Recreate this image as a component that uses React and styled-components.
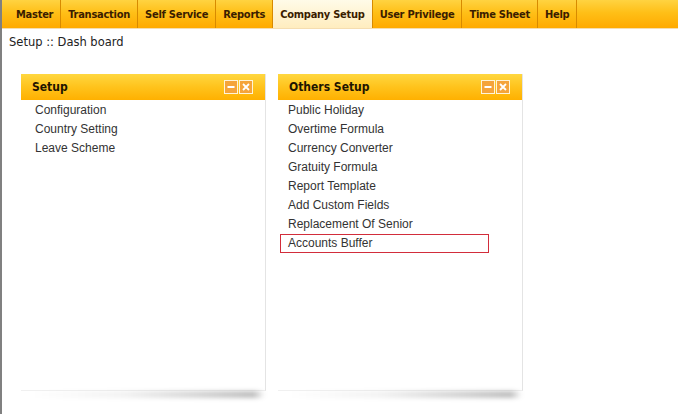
import React from 'react'
import styled, { createGlobalStyle } from 'styled-components'

const GlobalStyle = createGlobalStyle`
  html, body {
    margin: 0;
    padding: 0;
    background: #fff;
  }
  body {
    width: 678px;
    height: 414px;
    overflow: hidden;
    border-left: 2px solid #808080;
    box-sizing: border-box;
  }
`

const Page = styled.div`
  width: 676px;
  height: 414px;
  font-family: "Liberation Sans", Arial, sans-serif;
`

const MenuBar = styled.ul`
  display: flex;
  margin: 0;
  padding: 0 0 0 7px;
  height: 28px;
  list-style: none;
  background: linear-gradient(#ffd341 0%, #ffbf17 45%, #ffaa00 100%);
  border-bottom: 1px solid #f5ddb0;
`

const MenuItem = styled.li`
  display: flex;
  align-items: center;
  padding: 0 7px;
  font-family: "DejaVu Sans Condensed", "DejaVu Sans", sans-serif;
  font-weight: bold;
  font-size: 11px;
  letter-spacing: -0.25px;
  color: #3a1d00;
  border-right: 1px solid #d88a00;
  background: ${p => (p.$active ? 'linear-gradient(#fffbe8, #ffedbf)' : 'transparent')};
  cursor: pointer;
`

const Crumb = styled.div`
  padding: 6px 0 0 7px;
  height: 22px;
  font-family: "DejaVu Sans", sans-serif;
  font-size: 11.5px;
  color: #222;
`

const Panels = styled.div`
  display: flex;
  gap: 12px;
  padding: 17px 0 0 19px;
`

const Panel = styled.div`
  position: relative;
  width: 244px;
  height: 316px;
  background: #fff;
  border-right: 1px solid #e4e4e4;
  border-bottom: 1px solid #f0f0f0;
  &::after {
    content: '';
    position: absolute;
    left: 10px;
    right: 0;
    bottom: -8px;
    height: 7px;
    background: linear-gradient(90deg, rgba(0,0,0,0) 0%, rgba(0,0,0,0.05) 40%, rgba(0,0,0,0.25) 95%, rgba(0,0,0,0) 100%);
    filter: blur(2px);
  }
`

const Header = styled.div`
  display: flex;
  align-items: center;
  justify-content: space-between;
  height: 26px;
  padding: 0 12px 0 11px;
  background: linear-gradient(#ffd740 0%, #ffc31c 50%, #ffb000 100%);
`

const Title = styled.span`
  font-family: "DejaVu Sans Condensed", "DejaVu Sans", sans-serif;
  font-weight: bold;
  font-size: 12px;
  color: #1e1400;
`

const Tools = styled.div`
  display: flex;
  gap: 1px;
`

const ToolBtn = styled.span`
  width: 12px;
  height: 12px;
  border: 1px solid #fff4d8;
  background: #f5a43a;
  display: flex;
  align-items: center;
  justify-content: center;
`

const List = styled.ul`
  margin: 0;
  padding: 1px 0 0 ${p => p.$indent}px;
  list-style: none;
`

const Item = styled.li`
  height: 19px;
  line-height: 17px;
  padding: 0 7px;
  width: 209px;
  box-sizing: border-box;
  font-size: 12px;
  color: #333;
  border: 1px solid ${p => (p.$selected ? '#d22d3b' : 'transparent')};
  cursor: pointer;
`

const Minus = () => (
  <svg width="8" height="8" viewBox="0 0 8 8">
    <rect x="0.5" y="3" width="7" height="2" fill="#fff" />
  </svg>
)

const Close = () => (
  <svg width="8" height="8" viewBox="0 0 8 8">
    <path d="M1 1 L7 7 M7 1 L1 7" stroke="#fff" strokeWidth="1.8" />
  </svg>
)

const menu = [
  ['Master'],
  ['Transaction'],
  ['Self Service'],
  ['Reports'],
  ['Company Setup', true],
  ['User Privilege'],
  ['Time Sheet'],
  ['Help'],
]

const panels = [
  {
    title: 'Setup',
    indent: 6,
    items: ['Configuration', 'Country Setting', 'Leave Scheme'],
  },
  {
    title: 'Others Setup',
    indent: 2,
    items: [
      'Public Holiday',
      'Overtime Formula',
      'Currency Converter',
      'Gratuity Formula',
      'Report Template',
      'Add Custom Fields',
      'Replacement Of Senior',
      'Accounts Buffer',
    ],
    selected: 'Accounts Buffer',
  },
]

export default function App() {
  return (
    <Page>
      <GlobalStyle />
      <MenuBar>
        {menu.map(([label, active]) => (
          <MenuItem key={label} $active={active}>{label}</MenuItem>
        ))}
      </MenuBar>
      <Crumb>Setup :: Dash board</Crumb>
      <Panels>
        {panels.map(p => (
          <Panel key={p.title}>
            <Header>
              <Title>{p.title}</Title>
              <Tools>
                <ToolBtn><Minus /></ToolBtn>
                <ToolBtn><Close /></ToolBtn>
              </Tools>
            </Header>
            <List $indent={p.indent}>
              {p.items.map(it => (
                <Item key={it} $selected={it === p.selected}>{it}</Item>
              ))}
            </List>
          </Panel>
        ))}
      </Panels>
    </Page>
  )
}
